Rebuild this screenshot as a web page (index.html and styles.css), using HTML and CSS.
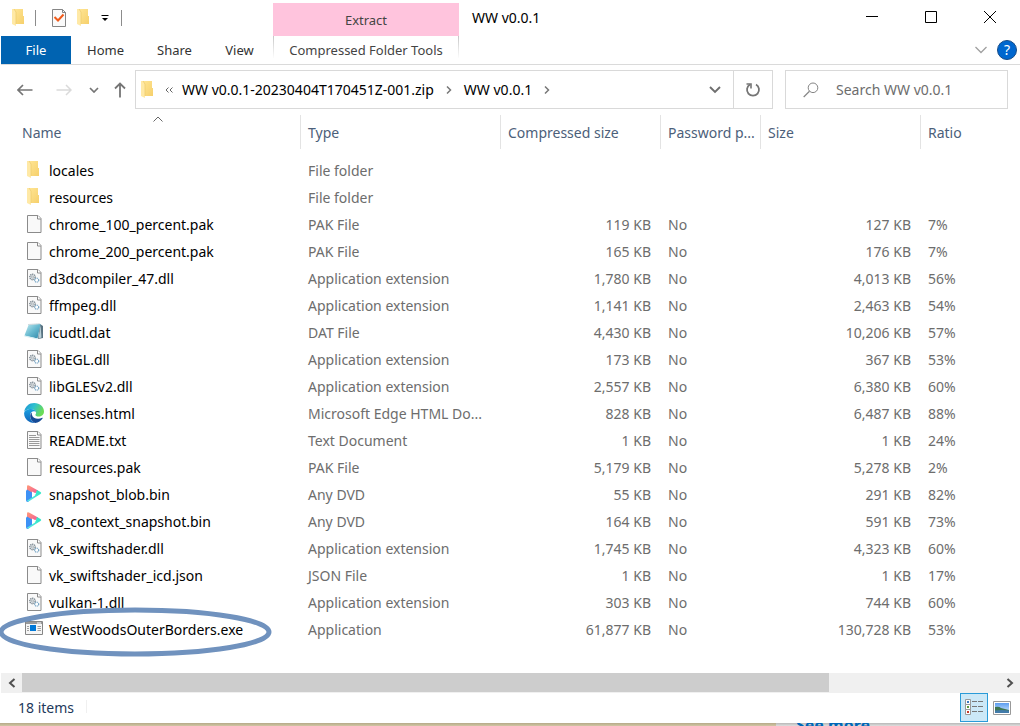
FILE: index.html
```
<!DOCTYPE html>
<html lang="en">
<head>
<meta charset="utf-8">
<title>WW v0.0.1</title>
<link rel="stylesheet" href="styles.css">
</head>
<body>
<svg class="defs" aria-hidden="true">
  <defs>
    <linearGradient id="g-folder" x1="0" y1="0" x2="1" y2="1"><stop offset="0" stop-color="#ffe594"/><stop offset="1" stop-color="#f6d06c"/></linearGradient>
    <linearGradient id="g-pad" x1="0" y1="0" x2="1" y2="1"><stop offset="0" stop-color="#c4ebf1"/><stop offset=".5" stop-color="#68bad0"/><stop offset="1" stop-color="#2d86a8"/></linearGradient>
    <linearGradient id="g-edge" x1="0" y1="0" x2="1" y2=".4"><stop offset="0" stop-color="#1c8fd6"/><stop offset=".5" stop-color="#2fc0cf"/><stop offset="1" stop-color="#6bdc57"/></linearGradient>
    <linearGradient id="g-edge2" x1="0" y1="0" x2="0" y2="1"><stop offset="0" stop-color="#1ba1e2"/><stop offset="1" stop-color="#1162b8"/></linearGradient>
    <linearGradient id="g-play" x1="0" y1="0" x2="1" y2="1"><stop offset="0" stop-color="#ff9a76"/><stop offset="1" stop-color="#f2549b"/></linearGradient>
    <linearGradient id="g-play2" x1="0" y1="1" x2="1" y2="0"><stop offset="0" stop-color="#5fe9e6"/><stop offset="1" stop-color="#27e6c0"/></linearGradient>
    <linearGradient id="g-sky" x1="0" y1="0" x2="0" y2="1"><stop offset="0" stop-color="#5c9df0"/><stop offset="1" stop-color="#d6ecff"/></linearGradient>
  </defs>
  <symbol id="folder" viewBox="0 0 20 20">
    <path d="M5 1h9v7h1v8H6z" fill="url(#g-folder)"/>
    <path d="M3 1h2l2 3v14l-4-2z" fill="#ffe9a6"/><path d="M5 1l2 3v12" fill="none" stroke="#efcd70" stroke-width=".8"/>
  </symbol>
  <symbol id="doc" viewBox="0 0 20 20">
    <path d="M3.500 1.500h10.500l3 3v14H3.500z" fill="#f9f9f9" stroke="#8b8b8b"/>
    <path d="M13.500 1.500v3.500h3.500" fill="#fff" stroke="#8b8b8b"/>
  </symbol>
  <symbol id="dll" viewBox="0 0 20 20">
    <use href="#doc"/>
    <circle cx="8.500" cy="9" r="2.700" fill="#e4e8ea" stroke="#7c8891" stroke-width="1.400" stroke-dasharray="1.300 .7"/><circle cx="8.500" cy="9" r="1" fill="#fff" stroke="#7c8891" stroke-width=".6"/>
    <circle cx="12.700" cy="12.200" r="2" fill="#fff" stroke="#78a5c4" stroke-width="1.300" stroke-dasharray="1.100 .6"/>
  </symbol>
  <symbol id="txt" viewBox="0 0 20 20">
    <use href="#doc"/>
    <path d="M5 5.500h7M5 7.500h10.500M5 9.500h10.500M5 11.500h10.500M5 13.500h10.500M5 15.500h10.500" stroke="#999"/>
  </symbol>
  <symbol id="pad" viewBox="0 0 20 20">
    <path d="M16 2l3 2v12l-5 1z" fill="#587382"/>
    <path d="M4.500 3L16.500 2l-3 14.500L.5 13.500z" fill="url(#g-pad)"/>
    <path d="M0 13.500l13.500 3v1L.5 14.500z" fill="#d5edf2"/><path d="M4.500 2.500l12-.8" stroke="#a4b5bd" stroke-dasharray="1 1"/>
    <path d="M16.500 3l1 12.500-3 1z" fill="#b9d0d8"/>
  </symbol>
  <symbol id="edge" viewBox="0 0 20 20">
    <path d="M.2 9C1 3.500 5 .1 10.200.1 16 .1 20 4 20 8.500c0 3.300-2.600 5-5.200 5-2.300 0-3.400-.9-3.400-1.600 0-.5.7-.8.7-2.100C12.100 7.500 9.700 5.900 7 5.900 3.800 5.900 1.200 7.200.2 9z" fill="url(#g-edge)"/>
    <path d="M.1 10.500C0 7.700 3.500 5.900 7 5.900c2.700 0 5 1.600 5.100 3.600-.5-.9-1.500-1.400-2.500-1.200C7 8.700 5.700 11 6 13.500c.3 3 2.500 5.500 5.200 6.400C5.200 20.500.3 16 .1 10.500z" fill="url(#g-edge2)"/>
    <path d="M7.500 9.400C5 12 6 17.800 11.200 19.900c3.200-.2 5.800-1.900 7.500-4.600.2-.4-.1-.7-.5-.5-4.200 2-9.600.7-10.300-3-.1-.8 0-1.700-.4-2.400z" fill="#164a96"/>
  </symbol>
  <symbol id="play" viewBox="0 0 20 20">
    <path d="M3 2.500Q3 .5 5 1.500l9 5-4 4-7-4z" fill="url(#g-play)"/>
    <path d="M3 5.500l5 3v6l-4 3.500q-2 .2-2-2V7z" fill="#3d91f5"/>
    <path d="M13 6l3.500 2q1.500 1 0 2L5 17.300q-1.500.8-2-.6l8-5.200z" fill="url(#g-play2)"/>
    <path d="M8 7.500l4 2-4 2.700z" fill="#fff"/>
  </symbol>
  <symbol id="exe" viewBox="0 0 20 20">
    <path d="M1.500 2.500h17v13h-17z" fill="#f6f6f6" stroke="#858585"/><path d="M2 3h16v2H2z" fill="#9a9a9a"/><path d="M13 4h4" stroke="#fff"/>
    <path d="M6 6h6v6H6z" fill="#0078d7"/><path d="M3 7.500h2M3 9.500h2M3 11.500h2M13.500 7.500H17M13.500 9.500H17M13.500 11.500H17" stroke="#a0a0a0"/>
  </symbol>
</svg>

<div class="window">
  <header class="top">
    <div class="left">
      <div class="quick">
        <svg class="icon"><use href="#folder"/></svg>
        <span class="bar"></span>
        <button class="plain" aria-label="Properties"><svg width="16" height="20" viewBox="0 0 16 20"><path d="M1.500 1.500h10l3 3v14h-13z" fill="#fafafa" stroke="#858585"/><path d="M11.500 1.500v3h3" fill="none" stroke="#858585"/><path d="M3.500 9l3.500 3.500 5.500-6" fill="none" stroke="#f05a1a" stroke-width="2"/></svg></button>
        <button class="plain" aria-label="New folder"><svg class="icon"><use href="#folder"/></svg></button>
        <button class="plain" aria-label="Customize"><svg width="8" height="8" viewBox="0 0 8 8"><path d="M.5 1.500h7" stroke="#000"/><path d="M1 4h6L4 7z"/></svg></button>
        <span class="bar"></span>
      </div>
      <nav class="tabs">
        <button class="tab file">File</button><button class="tab home">Home</button><button class="tab share">Share</button><button class="tab view">View</button>
      </nav>
    </div>
    <div class="context">
      <div class="extract">Extract</div>
      <button class="tools">Compressed Folder Tools</button>
    </div>
    <div class="right">
      <div class="titlebar">
        <h1>WW v0.0.1</h1>
        <div class="controls">
          <button class="plain" aria-label="Minimize"><svg width="12" height="12"><path d="M0 5.500h12" stroke="#000"/></svg></button>
          <button class="plain" aria-label="Maximize"><svg width="12" height="12"><path d="M.5.5h11v11H.5z" fill="none" stroke="#000"/></svg></button>
          <button class="plain" aria-label="Close"><svg width="12" height="12"><path d="M0 0l12 12M12 0L0 12" stroke="#000"/></svg></button>
        </div>
      </div>
      <div class="ribbon-end">
        <button class="plain" aria-label="Expand ribbon"><svg width="12" height="8"><path d="M.5 1L6 6.500 11.500 1" fill="none" stroke="#a0a0a0" stroke-width="1.300"/></svg></button>
        <button class="help" aria-label="Help">?</button>
      </div>
    </div>
  </header>

  <div class="navrow">
    <div class="arrows">
      <button class="plain" aria-label="Back"><svg width="16" height="12"><path d="M15.500 6H1M6 1L1 6l5 5" fill="none" stroke="#757575" stroke-width="1.700"/></svg></button>
      <button class="plain fwd" aria-label="Forward" disabled><svg width="16" height="12"><path d="M.5 6H15M10 1l5 5-5 5" fill="none" stroke="#dadada" stroke-width="1.500"/></svg></button>
      <button class="plain" aria-label="Recent locations"><svg width="10" height="6"><path d="M1 1l4 4 4-4" fill="none" stroke="#757575" stroke-width="1.700"/></svg></button>
      <button class="plain" aria-label="Up"><svg width="12" height="16"><path d="M6 15.500V1.500M1 6.500l5-5 5 5" fill="none" stroke="#757575" stroke-width="1.800"/></svg></button>
    </div>
    <div class="address">
      <svg class="icon"><use href="#folder"/></svg>
      <svg class="dbl" width="8" height="6"><path d="M3.500.5L1 3l2.500 2.500M7.500.5L5 3l2.500 2.500" fill="none" stroke="#666"/></svg>
      <a href="#">WW v0.0.1-20230404T170451Z-001.zip</a>
      <svg class="chev" width="6" height="8"><path d="M1 .5L4.500 4 1 7.500" fill="none" stroke="#777" stroke-width="1.500"/></svg>
      <a href="#">WW v0.0.1</a>
      <svg class="chev" width="6" height="8"><path d="M1 .5L4.500 4 1 7.500" fill="none" stroke="#777" stroke-width="1.500"/></svg>
      <button class="plain drop" aria-label="Previous locations"><svg width="12" height="8"><path d="M1 1l5 5 5-5" fill="none" stroke="#6e6e6e" stroke-width="1.900"/></svg></button>
      <button class="plain refresh" aria-label="Refresh"><svg width="16" height="16"><path d="M11 2.500a6 6 0 1 1-6 0" fill="none" stroke="#757575" stroke-width="1.800"/><path d="M1.500 2h4.500v4.500" fill="none" stroke="#757575" stroke-width="1.600"/></svg></button>
    </div>
    <label class="search">
      <svg width="16" height="16"><circle cx="10" cy="5.800" r="4.800" fill="none" stroke="#858585"/><path d="M6.500 9.300L.7 15" stroke="#858585" stroke-width="1.200"/></svg>
      <input type="text" placeholder="Search WW v0.0.1" aria-label="Search WW v0.0.1">
    </label>
  </div>

  <main>
    <table>
      <colgroup><col class="c-name"><col class="c-type"><col class="c-comp"><col class="c-pass"><col class="c-size"><col></colgroup>
      <thead><tr><th>Name<svg class="sort" width="10" height="6"><path d="M.5 5.500L5 1l4.500 4.500" fill="none" stroke="#666"/></svg></th><th>Type</th><th>Compressed size</th><th>Password p...</th><th>Size</th><th>Ratio</th></tr></thead>
      <tbody>
        <tr><td><div><svg class="icon"><use href="#folder"/></svg>locales</div></td><td>File folder</td><td></td><td></td><td></td><td></td></tr>
        <tr><td><div><svg class="icon"><use href="#folder"/></svg>resources</div></td><td>File folder</td><td></td><td></td><td></td><td></td></tr>
        <tr><td><div><svg class="icon"><use href="#doc"/></svg>chrome_100_percent.pak</div></td><td>PAK File</td><td>119 KB</td><td>No</td><td>127 KB</td><td>7%</td></tr>
        <tr><td><div><svg class="icon"><use href="#doc"/></svg>chrome_200_percent.pak</div></td><td>PAK File</td><td>165 KB</td><td>No</td><td>176 KB</td><td>7%</td></tr>
        <tr><td><div><svg class="icon"><use href="#dll"/></svg>d3dcompiler_47.dll</div></td><td>Application extension</td><td>1,780 KB</td><td>No</td><td>4,013 KB</td><td>56%</td></tr>
        <tr><td><div><svg class="icon"><use href="#dll"/></svg>ffmpeg.dll</div></td><td>Application extension</td><td>1,141 KB</td><td>No</td><td>2,463 KB</td><td>54%</td></tr>
        <tr><td><div><svg class="icon"><use href="#pad"/></svg>icudtl.dat</div></td><td>DAT File</td><td>4,430 KB</td><td>No</td><td>10,206 KB</td><td>57%</td></tr>
        <tr><td><div><svg class="icon"><use href="#dll"/></svg>libEGL.dll</div></td><td>Application extension</td><td>173 KB</td><td>No</td><td>367 KB</td><td>53%</td></tr>
        <tr><td><div><svg class="icon"><use href="#dll"/></svg>libGLESv2.dll</div></td><td>Application extension</td><td>2,557 KB</td><td>No</td><td>6,380 KB</td><td>60%</td></tr>
        <tr><td><div><svg class="icon"><use href="#edge"/></svg>licenses.html</div></td><td>Microsoft Edge HTML Do...</td><td>828 KB</td><td>No</td><td>6,487 KB</td><td>88%</td></tr>
        <tr><td><div><svg class="icon"><use href="#txt"/></svg>README.txt</div></td><td>Text Document</td><td>1 KB</td><td>No</td><td>1 KB</td><td>24%</td></tr>
        <tr><td><div><svg class="icon"><use href="#doc"/></svg>resources.pak</div></td><td>PAK File</td><td>5,179 KB</td><td>No</td><td>5,278 KB</td><td>2%</td></tr>
        <tr><td><div><svg class="icon"><use href="#play"/></svg>snapshot_blob.bin</div></td><td>Any DVD</td><td>55 KB</td><td>No</td><td>291 KB</td><td>82%</td></tr>
        <tr><td><div><svg class="icon"><use href="#play"/></svg>v8_context_snapshot.bin</div></td><td>Any DVD</td><td>164 KB</td><td>No</td><td>591 KB</td><td>73%</td></tr>
        <tr><td><div><svg class="icon"><use href="#dll"/></svg>vk_swiftshader.dll</div></td><td>Application extension</td><td>1,745 KB</td><td>No</td><td>4,323 KB</td><td>60%</td></tr>
        <tr><td><div><svg class="icon"><use href="#doc"/></svg>vk_swiftshader_icd.json</div></td><td>JSON File</td><td>1 KB</td><td>No</td><td>1 KB</td><td>17%</td></tr>
        <tr><td><div><svg class="icon"><use href="#dll"/></svg>vulkan-1.dll</div></td><td>Application extension</td><td>303 KB</td><td>No</td><td>744 KB</td><td>60%</td></tr>
        <tr><td><div><svg class="icon"><use href="#exe"/></svg>WestWoodsOuterBorders.exe<svg class="ring" viewBox="0 0 274 50"><ellipse cx="136" cy="25" rx="134" ry="22" fill="none" stroke="#7092be" stroke-width="5"/></svg></div></td><td>Application</td><td>61,877 KB</td><td>No</td><td>130,728 KB</td><td>53%</td></tr>
      </tbody>
    </table>
  </main>

  <div class="scroll">
    <button class="plain" aria-label="Scroll left"><svg width="8" height="10"><path d="M6.500 1l-4.500 4 4.500 4" fill="none" stroke="#505050" stroke-width="2"/></svg></button>
    <div class="track"><div class="thumb"></div></div>
    <button class="plain" aria-label="Scroll right"><svg width="8" height="10"><path d="M1.500 1L6 5 1.500 9" fill="none" stroke="#505050" stroke-width="2"/></svg></button>
  </div>

  <footer>
    <span class="count">18 items</span>
    <div class="views">
      <button class="plain on" aria-label="Details view"><svg width="18" height="17"><path d="M.5.5h5v5h-5zM.5 5.500h5v5h-5zM.5 10.500h5v5h-5z" fill="#fff" stroke="#999"/><path d="M2 2h2v2H2z" fill="#3a78c2"/><path d="M2 7h2v2H2z" fill="#5a9a3a"/><path d="M2 12h2v2H2z" fill="#c93a2a"/><path d="M7 2.500h5M13 2.500h5M7 7.500h5M13 7.500h5M7 12.500h5M13 12.500h5" stroke="#777"/></svg></button>
      <button class="plain" aria-label="Large thumbnails view"><svg width="18" height="14"><path d="M.5.5h17v13H.5z" fill="#fff" stroke="#999"/><path d="M2 2h14v10H2z" fill="url(#g-sky)"/><path d="M2 6q4-1 6 1l8 2v1H2z" fill="#3f7652"/><path d="M2 9.500q7-1 14 0V12H2z" fill="#427baa"/></svg></button>
    </div>
  </footer>
</div>
<div class="behind"><div class="tan"></div><div class="page"><a href="#">See more</a></div></div>
</body>
</html>
```
FILE: styles.css
```
* { box-sizing: border-box; }
body {
  margin: 0;
  min-height: 100vh;
  display: flex;
  flex-direction: column;
  background: #fff;
  color: #000;
  font: 14px/20px "Noto Sans", "Open Sans", sans-serif;
}
button, input { font: inherit; color: inherit; }
button { border: 0; padding: 0; background: none; }
a { color: inherit; text-decoration: none; }
svg { display: block; flex: none; }
.defs { position: absolute; width: 0; height: 0; }
.icon { width: 20px; height: 20px; }
.plain { display: flex; align-items: center; justify-content: center; }
.window { flex: 1; display: flex; flex-direction: column; padding-left: 1px; }

.top { display: flex; height: 65px; border-bottom: 1px solid #dadada; }
.left { width: 272px; }
.quick { height: 36px; display: flex; align-items: center; padding-left: 8px; }
.quick .bar { width: 1px; height: 16px; background: #8c8c8c; margin: 0 15px 0 6px; }
.quick .plain + .plain { margin-left: 7px; }
.quick .plain + .bar { margin-left: 12px; }
.tabs { display: flex; height: 28px; font-size: 13px; color: #333; }
.file { width: 70px; background: #0063b1; color: #fff; }
.home { width: 69px; }
.share { width: 69px; }
.view { width: 61px; }
.context { width: 186px; padding-top: 3px; font-size: 13px; color: #444; }
.extract { height: 33px; line-height: 34px; text-align: center; background: #ffc4dd; }
.tools {
  display: block;
  width: 100%;
  height: 22px;
  padding-top: 4px;
  white-space: nowrap;
  border: solid;
  border-width: 0 1px;
  border-image: linear-gradient(#c4c4c4, #fff) 1;
}
.right { flex: 1; }
.titlebar { display: flex; justify-content: space-between; height: 36px; padding: 0 1px 0 13px; }
h1 { margin: 0; font-size: 14px; font-weight: 400; line-height: 36px; }
.controls { display: flex; }
.controls .plain { width: 59px; height: 34px; }
.ribbon-end { display: flex; align-items: center; justify-content: flex-end; gap: 10px; height: 28px; padding-right: 3px; }
.help { width: 20px; height: 20px; border: 1px solid #174c88; border-radius: 50%; background: #0067cf; color: #fff; font-size: 14px; line-height: 18px; }

.navrow { display: flex; height: 50px; padding: 5px 12px 6px 0; }
.arrows { display: flex; align-items: center; gap: 15px; width: 134px; padding-left: 16px; }
.fwd { margin: 0 2px 0 8px; }
.address { flex: 1; display: flex; align-items: center; padding-left: 2px; border: 1px solid #d9d9d9; white-space: nowrap; }
.dbl { margin: 0 9px 0 7px; }
.chev { margin: 0 12px; }
.drop { width: 36px; height: 100%; margin-left: auto; }
.refresh { width: 39px; height: 100%; border-left: 1px solid #d9d9d9; }
.search { width: 223px; margin-left: 12px; padding-left: 17px; display: flex; align-items: center; gap: 17px; border: 1px solid #d9d9d9; }
.search input { flex: 1; min-width: 0; border: 0; padding: 0; outline: 0; background: none; }
.search input::placeholder { color: #6d6d6d; opacity: 1; }

main { flex: 1; }
table { width: 100%; table-layout: fixed; border-collapse: separate; border-spacing: 0; color: #6d6d6d; }
.c-name { width: 300px; }
.c-type { width: 200px; }
.c-comp, .c-size { width: 160px; }
.c-pass { width: 100px; }
th { height: 34px; padding: 2px 0 0 7px; text-align: left; font-weight: 400; color: #4c607a; border-right: 1px solid #e3e3e3; white-space: nowrap; }
th:first-child { position: relative; padding-left: 21px; }
th:last-child { border-right: 0; }
.sort { position: absolute; left: 51%; top: 1px; }
tbody::before { content: ""; display: table-row; height: 8px; }
td { height: 27px; padding: 0 10px 0 7px; white-space: nowrap; }
td:first-child { padding: 0 0 0 23px; color: #000; }
td:nth-child(3), td:nth-child(5) { text-align: right; }
td div { position: relative; display: flex; align-items: center; gap: 5px; height: 27px; }
td .icon { margin-bottom: 2px; }
.ring { position: absolute; left: -25px; top: -9px; width: 274px; height: 50px; }

.scroll { display: flex; height: 20px; background: #f0f0f0; }
.scroll .plain { width: 21px; }
.track { flex: 1; }
.thumb { width: 82.6%; height: 19px; background: #cdcdcd; }
footer { display: flex; justify-content: space-between; height: 30px; padding-right: 4px; color: #1e395b; }
.count { margin: 7px 0 10px 17px; padding-right: 12px; line-height: 16px; border-right: 1px solid #f0f0f0; }
.views { display: flex; }
.views .plain { width: 28px; height: 29px; }
.views .on { background: #cce8f7; border: 1px solid #2a9bd8; }
.behind { display: flex; height: 3px; overflow: hidden; }
.tan { width: 776px; background: linear-gradient(#b5a988, #d2c6a4); }
.page { flex: 1; display: flex; align-items: center; padding-left: 20px; background: linear-gradient(#b8b8b8, #dedede); color: #0067b8; font-size: 16px; font-weight: 700; }
```
